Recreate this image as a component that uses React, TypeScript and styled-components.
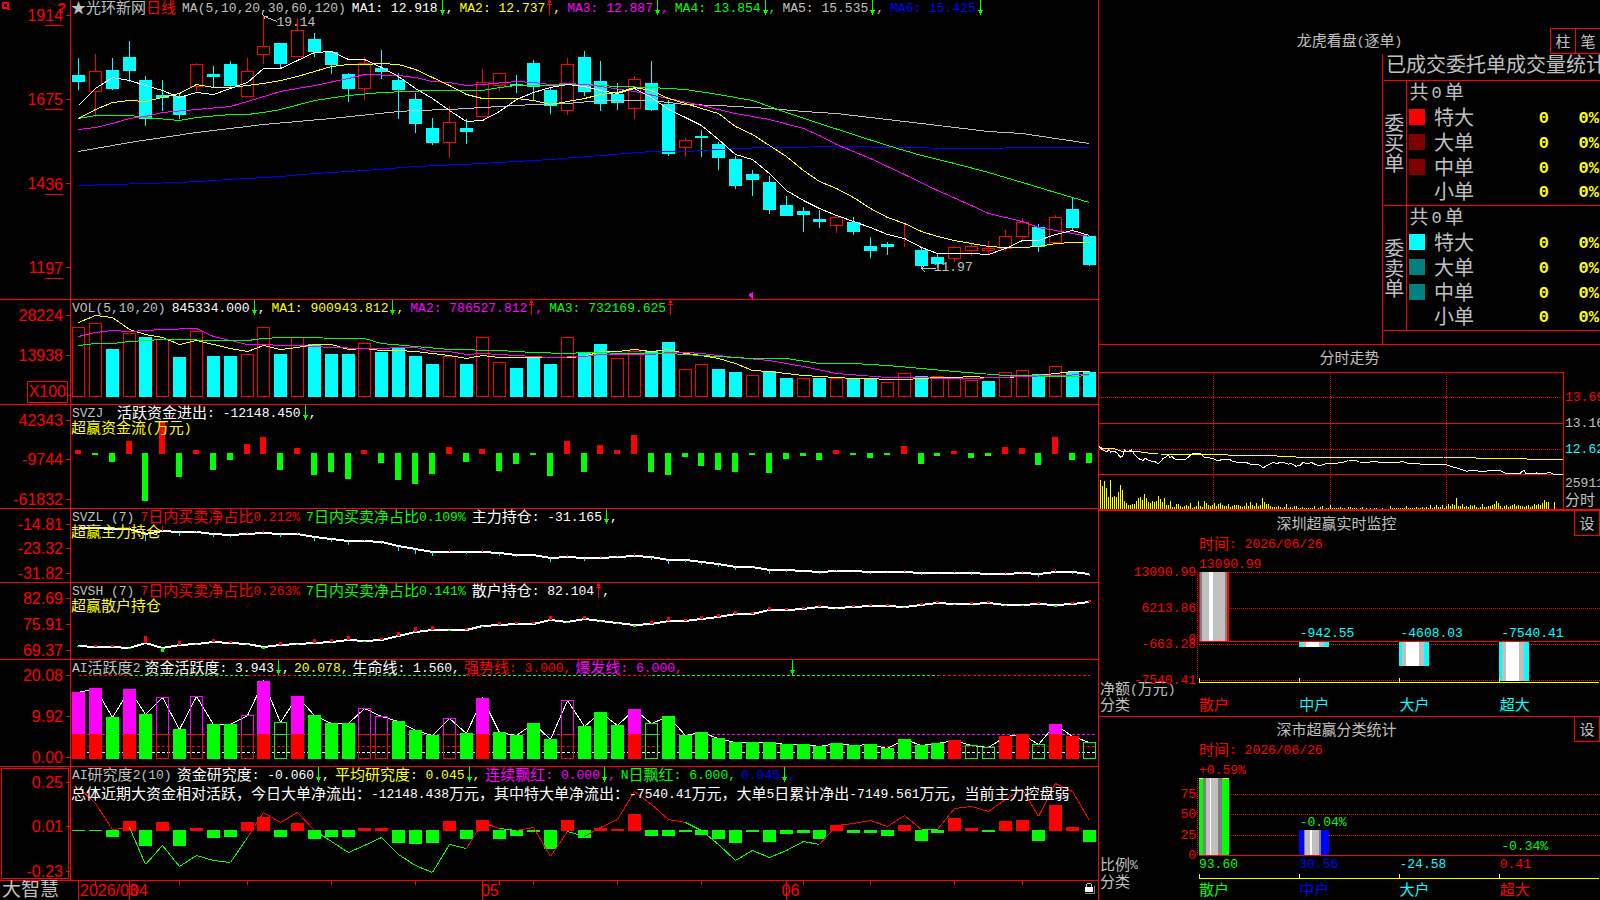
import React from 'react';
import styled, { createGlobalStyle } from 'styled-components';

const RED = '#ff0000';
const CYAN = '#00ffff';
const GREEN = '#00ff00';
const YELLOW = '#ffff00';
const MAGENTA = '#ff00ff';
const SILVER = '#c0c0c0';
const GRAY = '#808080';
const BLUE = '#0000ff';
const WHITE = '#ffffff';

const GlobalStyle = createGlobalStyle`
  * { box-sizing: border-box; }
  body {
    margin: 0;
    background: #000;
    color: ${SILVER};
    font-family: "Liberation Mono", "Noto Sans CJK SC", monospace;
    font-size: 13px;
    line-height: 16px;
    overflow: hidden;
  }
  h2 { margin: 0; font-weight: 400; font-size: 13px; }
`;

/* ---------- shared pieces ---------- */

const Cjk = styled.span<{ $size?: number }>`
  font-family: "Noto Sans CJK SC", sans-serif;
  font-size: ${p => p.$size ?? 15}px;
  font-weight: 400;
  line-height: 0;
  vertical-align: -1px;
`;

const Mixed = ({ text, size }: { text: string; size?: number }) => (
  <>
    {text.split(/([\u2605\u3000-\u9fff\uff00-\uffef]+)/).map((part, i) =>
      i % 2 ? <Cjk key={i} $size={size}>{part}</Cjk> : part
    )}
  </>
);

const ArrowSvg = styled.svg`
  flex: none;
  width: 8px;
  height: 15px;
`;

const Arrow = ({ dir }: { dir: 'up' | 'down' }) => (
  <ArrowSvg viewBox="0 0 8 15" shapeRendering="crispEdges">
    {dir === 'down' ? (
      <path d="M4.5 0V15M2 10.5H7M3 11.5H6M3 12.5H6" stroke={GREEN} fill="none" />
    ) : (
      <path d="M4.5 0V15M3 1.5H6M3 2.5H6M2 4.5H7" stroke={RED} fill="none" />
    )}
  </ArrowSvg>
);

/* ---------- page frame ---------- */

const Screen = styled.main`
  display: grid;
  grid-template-columns: minmax(0, 1099fr) minmax(0, 501fr);
  grid-template-rows: minmax(0, 1fr);
  height: 100vh;
  min-height: 720px;
  background: #000;
`;

const Charts = styled.section`
  display: grid;
  grid-template-rows:
    minmax(0, 300fr) minmax(0, 105fr) minmax(0, 104fr) minmax(0, 74fr)
    minmax(0, 77fr) minmax(0, 107fr) minmax(0, 114fr) minmax(0, 19fr);
  border-right: 1px solid ${RED};
  min-width: 0;
`;

const Side = styled.aside`
  display: grid;
  grid-template-rows: minmax(0, 345fr) minmax(0, 166fr) minmax(0, 206fr) minmax(0, 183fr);
  min-width: 0;
  overflow: hidden;
`;

/* ---------- indicator panels ---------- */

const Panel = styled.article`
  display: grid;
  grid-template-columns: 71px minmax(0, 1fr);
  grid-template-rows: minmax(0, 1fr);
  border-bottom: 1px solid ${RED};
  min-height: 0;
`;

const Axis = styled.div<{ $bottom?: number; $framed?: boolean }>`
  position: relative;
  display: flex;
  flex-direction: column;
  justify-content: space-between;
  padding: 6px 0 ${p => p.$bottom ?? 0}px;
  border-right: 1px solid ${RED};
  box-shadow: ${p => (p.$framed ? `inset 0 0 0 1px #000, inset 0 0 0 2px ${RED}` : 'none')};
`;

const AxisLabel = styled.div`
  display: flex;
  justify-content: flex-end;
  align-items: center;
  gap: 3px;
  height: 18px;
  color: ${RED};
  font: 16px/18px "Liberation Sans", sans-serif;
  &::after {
    content: "";
    width: 4px;
    height: 1px;
    background: ${RED};
  }
`;

const Digits = styled.span`
  padding-top: 1px;
`;

const Cents = styled.span`
  border-bottom: 1px solid ${RED};
  line-height: 19px;
  margin-top: 2px;
`;

const PriceLabel = styled(AxisLabel)`
  gap: 0;
  &::after { margin-left: 3px; }
`;

const UnitBox = styled.span`
  position: absolute;
  right: 2px;
  bottom: 1px;
  padding: 0 1px;
  border: 1px solid ${RED};
  background: #000;
  color: ${RED};
  font: 16px/20px "Liberation Sans", sans-serif;
`;

const CornerMark = styled.svg`
  position: absolute;
  left: 2px;
  top: 2px;
  width: 8px;
  height: 8px;
`;

const HelpMark = styled.span`
  position: absolute;
  right: 4px;
  top: 0;
  color: ${RED};
  font: bold 14px/16px "Liberation Sans", sans-serif;
`;

const Plot = styled.div`
  position: relative;
  display: grid;
  grid-template: minmax(0, 1fr) / minmax(0, 1fr);
  min-height: 0;
  & > * { grid-area: 1 / 1; }
`;

const Canvas = styled.svg`
  display: block;
  width: 100%;
  height: 100%;
  min-height: 0;
  & * { vector-effect: non-scaling-stroke; }
`;

const Overlay = styled.div`
  position: relative;
  align-self: start;
  display: grid;
  white-space: nowrap;
`;

const Legend = styled.header<{ $gap: number }>`
  display: flex;
  gap: ${p => p.$gap}px;
  height: 15px;
  padding-left: 1px;
  line-height: 18px;
`;

const LegendItem = styled.span<{ $color: string }>`
  display: flex;
  color: ${p => p.$color};
  & > span { white-space: pre; }
`;

const SubTitle = styled.div`
  color: ${YELLOW};
  line-height: 18px;
`;

const Message = styled.p`
  margin: 3px 0 0;
  color: ${WHITE};
  line-height: 20px;
`;

const PriceTag = styled.span<{ $x: number; $y: number }>`
  position: absolute;
  left: ${p => p.$x}%;
  top: ${p => p.$y}%;
  line-height: 16px;
`;

type Item = { text: string; color: string; arrow?: 'up' | 'down'; end?: string };

const LegendRow = ({ items, gap = 6 }: { items: Item[]; gap?: number }) => (
  <Legend $gap={gap}>
    {items.map((it, i) => (
      <LegendItem key={i} $color={it.color}>
        <span><Mixed text={it.text} /></span>
        {it.arrow && <Arrow dir={it.arrow} />}
        {it.end && <span>{it.end}</span>}
      </LegendItem>
    ))}
  </Legend>
);

const Labels = ({ values, framed }: { values: string[]; framed?: boolean }) => (
  <Axis $framed={framed}>
    {values.map((v, i) => <AxisLabel key={i}><Digits>{v}</Digits></AxisLabel>)}
  </Axis>
);

/* ---------- chart helpers ---------- */

const left = (i: number) => Math.round(72 + 16.85 * i);
const mid = (i: number) => left(i) + 6.5;

type Pair = [number, number];

const Line = ({ data, color, dy = 0 }: { data: Pair[]; color: string; dy?: number }) => (
  <polyline
    points={data.map(([i, y]) => `${mid(i)},${y + dy + 0.5}`).join(' ')}
    stroke={color} fill="none"
  />
);

/* two stacked strokes keep the line two pixels tall on every slope */
const ThickLine = ({ data }: { data: Pair[] }) => (
  <g>
    <Line data={data} color={WHITE} />
    <Line data={data} color={WHITE} dy={1} />
  </g>
);

const Hollow = ({ x, y, h, color }: { x: number; y: number; h: number; color: string }) => (
  <rect x={x + 0.5} y={y + 0.5} width={12} height={Math.max(h - 1, 0)} stroke={color} fill="none" />
);

const ChartSvg = ({ top, height, children }: { top: number; height: number; children: React.ReactNode }) => (
  <Canvas viewBox={`71 ${top} 1027 ${height}`} preserveAspectRatio="none" shapeRendering="crispEdges">
    {children}
  </Canvas>
);

const series = (values: number[]): Pair[] => values.map((v, i) => [i, v] as Pair);

/* ---------- data ---------- */

const candleKind = 'crcccccrccrrcrcccrccccrcrrcccrcccrccrcccccccc' + 'rcccrccrrrrrcrcc';
const candles: [number, number, number, number][] = [
  [58, 75, 82, 90], [54, 71, 92, 117], [58, 70, 89, 90], [41, 57, 71, 82], [76, 80, 119, 126],
  [80, 95, 98, 111], [94, 96, 115, 119], [63, 64, 87, 91], [66, 74, 77, 87], [61, 64, 86, 87],
  [58, 71, 97, 97], [16, 46, 55, 64], [43, 43, 64, 68], [18, 30, 57, 57], [33, 39, 52, 57],
  [51, 52, 65, 74], [73, 74, 89, 102], [57, 63, 89, 100], [50, 68, 72, 79], [73, 80, 90, 119],
  [93, 99, 124, 133], [118, 128, 143, 145], [106, 122, 143, 158], [119, 128, 132, 144], [69, 82, 117, 117],
  [73, 73, 86, 91], [75, 84, 86, 93], [60, 63, 87, 100], [87, 90, 106, 114], [58, 64, 111, 115],
  [51, 57, 92, 96], [61, 81, 104, 111], [83, 94, 103, 110], [76, 79, 109, 119], [61, 83, 110, 111],
  [100, 104, 154, 156], [138, 140, 148, 157], [130, 136, 138, 157], [142, 144, 158, 170], [156, 159, 186, 189],
  [170, 174, 180, 196], [176, 182, 210, 214], [196, 205, 216, 216], [207, 211, 215, 232], [210, 219, 222, 228],
  [217, 217, 226, 233], [217, 222, 232, 235], [237, 246, 251, 258], [242, 244, 247, 255], [224, 242, 243, 247],
  [247, 250, 266, 268], [254, 257, 264, 268], [247, 247, 259, 262], [244, 246, 251, 256], [241, 248, 251, 254],
  [230, 236, 249, 251], [218, 222, 237, 240], [224, 227, 247, 252], [215, 217, 243, 243], [197, 209, 228, 230],
  [236, 236, 265, 266],
];

const ma5 = series([
  105, 88, 77, 80, 85, 90, 97, 92, 94, 88, 82, 68, 68, 60, 52, 51, 59, 59, 67, 76, 88, 98, 110, 121, 120,
  111, 99, 92, 87, 84, 86, 90, 93, 88, 97, 109, 117, 125, 139, 154, 159, 173, 190, 200, 208, 215, 221, 227,
  234, 238, 247, 253, 253, 253, 254, 248, 240, 240, 234, 230, 235,
]);
const ma10 = series([
  118, 109, 102, 100, 101, 97, 93, 84, 87, 87, 85, 83, 80, 76, 71, 66, 64, 64, 63, 64, 69, 77, 85, 94, 98,
  98, 98, 100, 104, 101, 98, 94, 92, 87, 90, 98, 103, 108, 113, 126, 134, 145, 156, 170, 181, 188, 197, 208,
  217, 223, 231, 236, 240, 243, 246, 247, 247, 246, 243, 242, 242,
]);
const ma20: Pair[] = [
  [0, 129], [1, 127], [2, 123], [3, 118], [4, 116], [5, 112], [7, 109], [9, 106], [10, 101], [12, 91], [14, 85],
  [16, 78], [17, 74], [19, 75], [20, 77], [21, 81], [22, 82], [23, 85], [24, 84], [26, 81], [27, 82], [28, 84],
  [29, 83], [30, 84], [31, 86], [33, 91], [35, 98], [37, 105], [39, 113], [41, 119], [43, 128], [44, 135],
  [45, 144], [47, 158], [49, 174], [51, 190], [53, 205], [54, 213], [55, 217], [56, 221], [57, 227], [58, 230],
  [59, 233], [60, 236],
];
const ma30: Pair[] = [
  [0, 118], [1, 115], [3, 115], [4, 117], [6, 120], [7, 117], [9, 114], [10, 114], [11, 112], [12, 109],
  [14, 100], [16, 95], [18, 92], [21, 90], [24, 90], [25, 87], [26, 85], [28, 85], [29, 84], [30, 84], [32, 86],
  [34, 87], [36, 89], [38, 94], [40, 100], [42, 112], [44, 123], [46, 134], [48, 145], [50, 155], [52, 163],
  [54, 172], [56, 182], [58, 192], [59, 197], [60, 202],
];
const ma60: Pair[] = [
  [0, 151], [3, 142], [7, 132], [11, 124], [15, 118], [19, 111], [20, 110], [22, 109], [24, 107], [27, 104],
  [29, 103], [31, 100], [34, 100], [36, 104], [38, 105], [41, 108], [43, 111], [45, 113], [47, 117], [50, 123],
  [54, 131], [56, 133], [58, 138], [60, 143],
];
const ma120: Pair[] = [
  [0, 185], [6, 182], [12, 176], [14, 173], [17, 170], [20, 166], [24, 163], [28, 159], [31, 155], [34, 151],
  [36, 151], [38, 149], [39, 148], [41, 147], [46, 146], [48, 147], [53, 148], [57, 147], [60, 147],
];

const volumeKind = 'rrcrcrcrccrrcrcccrccccrcrrcccrccrrccrrccrccrcrccrrcrrrcrrcrcc';
const volumeTop = [
  327, 323, 349, 333, 337, 339, 357, 331, 356, 356, 354, 327, 354, 337, 344, 354, 354, 343, 352, 347, 356, 364,
  356, 364, 337, 362, 368, 357, 364, 337, 352, 344, 358, 351, 351, 342, 369, 364, 369, 372, 375, 371, 378, 378,
  378, 378, 379, 379, 382, 373, 376, 376, 378, 380, 381, 372, 370, 374, 366, 372, 372,
];
const volMa5 = series([
  322, 315, 317, 329, 334, 337, 344, 340, 344, 348, 351, 345, 349, 347, 344, 344, 349, 348, 350, 350, 351, 353,
  355, 358, 355, 357, 357, 357, 357, 357, 356, 351, 351, 349, 351, 349, 353, 355, 358, 363, 370, 371, 373, 375,
  376, 377, 378, 378, 379, 379, 378, 377, 377, 376, 377, 377, 376, 375, 373, 371, 371,
]);
const volMa10: Pair[] = [
  [0, 336], [1, 332], [2, 330], [3, 331], [5, 329], [7, 328], [8, 336], [10, 344], [13, 345], [15, 347], [17, 348],
  [20, 347], [21, 351], [22, 351], [23, 354], [24, 353], [26, 355], [28, 357], [30, 356], [31, 354], [34, 354],
  [35, 352], [36, 352], [37, 353], [39, 357], [41, 360], [43, 366], [45, 373], [48, 377], [53, 378], [56, 376],
  [58, 375], [60, 374],
];
const volMa20: Pair[] = [
  [0, 345], [1, 343], [2, 343], [3, 341], [5, 339], [9, 340], [10, 340], [11, 338], [12, 337], [17, 338], [18, 343],
  [20, 346], [22, 349], [25, 350], [27, 352], [29, 353], [30, 352], [33, 353], [35, 353], [37, 355], [40, 358],
  [42, 358], [44, 363], [46, 363], [48, 365], [50, 368], [52, 371], [55, 375], [59, 376], [60, 375],
];

const flow = [
  450, 455, 462, 441, 501, 421, 477, 450, 470, 460, 444, 437, 470, 448, 475, 472, 479, 450, 463, 480, 484, 474,
  447, 462, 449, 471, 464, 455, 476, 441, 472, 445, 450, 435, 472, 475, 457, 466, 470, 472, 455, 473, 459, 456,
  460, 450, 455, 458, 455, 446, 464, 456, 451, 458, 456, 447, 448, 465, 437, 460, 463,
];
const mainHold = [
  527, 527, 528, 528, 533, 530, 531, 531, 533, 534, 533, 532, 533, 533, 536, 538, 540, 540, 541, 545, 548, 551,
  551, 551, 551, 552, 554, 554, 557, 556, 557, 557, 556, 555, 556, 559, 559, 561, 563, 566, 566, 569, 569, 570,
  571, 570, 570, 571, 571, 571, 572, 572, 572, 572, 573, 573, 572, 573, 571, 571, 573,
];
const retailHold = [
  645, 646, 646, 647, 642, 647, 644, 643, 641, 642, 643, 646, 644, 643, 642, 641, 639, 640, 639, 635, 631, 629,
  629, 629, 625, 624, 623, 623, 619, 621, 618, 620, 622, 624, 623, 620, 620, 618, 616, 613, 613, 609, 609, 608,
  606, 607, 606, 605, 605, 606, 604, 602, 603, 603, 602, 604, 604, 603, 604, 603, 601,
];

const activeKind = 'MMGMGmGmGGmMgMGGGmmGGGmGMGGGGmGGGMgGGGGGGGGGGGGGGGGGRggRRgMRg';
const active = [
  692, 688, 717, 689, 714, 697, 729, 696, 724, 724, 715, 681, 722, 696, 715, 723, 723, 708, 716, 721, 730, 735,
  718, 733, 698, 732, 735, 723, 739, 700, 726, 712, 725, 709, 723, 716, 735, 732, 738, 742, 742, 742, 744, 744,
  746, 743, 745, 744, 748, 739, 745, 743, 740, 745, 747, 736, 734, 744, 724, 736, 742,
];
const capSegments: [number, number, string][] = [
  [0, 3, RED], [3, 10, GREEN], [10, 13, RED], [13, 23, GREEN], [23, 24, RED], [24, 32, GREEN], [32, 34, RED],
  [34, 51, GREEN], [51, 60, RED],
];

const study = [
  831, 831, 837, 821, 846, 822, 846, 828, 838, 837, 822, 817, 837, 823, 839, 837, 837, 828, 828, 843, 844, 843,
  821, 839, 820, 839, 836, 832, 849, 820, 838, 828, 829, 814, 836, 836, 832, 835, 839, 843, 832, 842, 834, 833,
  839, 825, 833, 833, 836, 825, 841, 833, 818, 828, 832, 821, 820, 841, 805, 827, 842,
];
const studyLine = [
  787, 803, 829, 827, 864, 845, 866, 855, 860, 862, 837, 812, 822, 812, 830, 841, 852, 845, 837, 854, 865, 872,
  844, 848, 822, 828, 830, 827, 856, 831, 836, 827, 819, 791, 804, 819, 822, 830, 844, 860, 850, 857, 850, 841,
  844, 825, 823, 820, 826, 815, 829, 829, 808, 806, 811, 799, 789, 816, 783, 791, 820,
];
const studyGreen = (i: number) =>
  (i >= 3 && i <= 9) || (i >= 14 && i <= 22) || i === 25 || i === 29 || (i >= 36 && i <= 43) || i === 50;

/* ---------- left side panels ---------- */

const PricePanel = () => (
  <Panel>
    <Axis $bottom={22}>
      <CornerMark viewBox="0 0 8 8" shapeRendering="crispEdges">
        <rect x="1" y="1" width="5" height="5" stroke={RED} strokeWidth="2" fill="none" />
        <path d="M5 7.5H8" stroke={RED} />
      </CornerMark>
      {['1914', '1675', '1436', '1197'].map(v => (
        <PriceLabel key={v}><Digits>{v.slice(0, 2)}</Digits><Cents>{v.slice(2)}</Cents></PriceLabel>
      ))}
      <HelpMark>?</HelpMark>
    </Axis>
    <Plot>
      <ChartSvg top={0} height={299}>
        {candles.map(([hi, top, bottom, lo], i) => {
          const up = candleKind[i] === 'r';
          const x = left(i);
          return up ? (
            <g key={i}>
              <path d={`M${x + 6.5} ${hi}V${top}M${x + 6.5} ${bottom}V${lo}`} stroke={RED} />
              <Hollow x={x} y={top} h={bottom - top} color={RED} />
            </g>
          ) : (
            <g key={i}>
              <path d={`M${x + 6.5} ${hi}V${lo}`} stroke={CYAN} />
              <rect x={x} y={top} width={13} height={bottom - top} fill={CYAN} />
            </g>
          );
        })}
        <Line data={ma120} color={BLUE} />
        <Line data={ma60} color={SILVER} />
        <Line data={ma30} color={GREEN} />
        <Line data={ma20} color={MAGENTA} />
        <Line data={ma10} color={YELLOW} />
        <Line data={ma5} color={WHITE} />
        <path d="M262 13.5L264.5 16.5L268 16.5M264.5 16.5V19M264.5 16.5L277 21.5" stroke={SILVER} fill="none" />
        <path d="M921 268.5H936M925 265L921.5 268.5L925 272" stroke={SILVER} fill="none" />
        <path d="M748 295L753 292V299Z" fill={MAGENTA} />
      </ChartSvg>
      <PriceTag $x={20} $y={5}>19.14</PriceTag>
      <PriceTag $x={84} $y={87}>11.97</PriceTag>
      <TopLegend>
        <LegendRow
          items={[
            { text: 'MA(5,10,20,30,60,120)', color: SILVER },
            { text: 'MA1: 12.918', color: WHITE, arrow: 'down', end: ',' },
            { text: 'MA2: 12.737', color: YELLOW, arrow: 'up', end: ',' },
            { text: 'MA3: 12.887', color: MAGENTA, arrow: 'down', end: ',' },
            { text: 'MA4: 13.854', color: GREEN, arrow: 'down', end: ',' },
            { text: 'MA5: 15.535', color: SILVER, arrow: 'down', end: ',' },
            { text: 'MA6: 15.425', color: BLUE, arrow: 'down' },
          ]}
        />
      </TopLegend>
    </Plot>
  </Panel>
);

const TopLegendBox = styled(Overlay)`
  grid-template-columns: auto auto 1fr;
  height: 15px;
  line-height: 18px;
`;

const Period = styled.span`
  color: ${RED};
  padding-right: 5px;
`;

const TopLegend = ({ children }: { children: React.ReactNode }) => (
  <TopLegendBox>
    <span><Mixed text="★光环新网" /></span>
    <Period><Mixed text="日线" /></Period>
    {children}
  </TopLegendBox>
);

const VolumePanel = () => (
  <Panel>
    <Axis>
      {['28224', '13938', ''].map((v, i) => <AxisLabel key={i}><Digits>{v}</Digits></AxisLabel>)}
      <UnitBox>X100</UnitBox>
    </Axis>
    <Plot>
      <ChartSvg top={300} height={104}>
        {volumeTop.map((y, i) =>
          volumeKind[i] === 'r'
            ? <Hollow key={i} x={left(i)} y={y} h={397 - y} color={RED} />
            : <rect key={i} x={left(i)} y={y} width={13} height={397 - y} fill={CYAN} />
        )}
        <Line data={volMa5} color={YELLOW} />
        <Line data={volMa10} color={MAGENTA} />
        <Line data={volMa20} color={GREEN} />
      </ChartSvg>
      <Overlay>
        <LegendRow
          items={[
            { text: 'VOL(5,10,20)', color: SILVER },
            { text: '845334.000', color: WHITE, arrow: 'down', end: ',' },
            { text: 'MA1: 900943.812', color: YELLOW, arrow: 'down', end: ',' },
            { text: 'MA2: 786527.812', color: MAGENTA, arrow: 'up', end: ',' },
            { text: 'MA3: 732169.625', color: GREEN, arrow: 'up' },
          ]}
        />
      </Overlay>
    </Plot>
  </Panel>
);

const FlowPanel = () => (
  <Panel>
    <Labels values={['42343', '-9744', '-61832']} />
    <Plot>
      <ChartSvg top={405} height={103}>
        {flow.map((y, i) =>
          y < 453
            ? <rect key={i} x={left(i) + 3} y={y} width={6} height={454 - y} fill={RED} />
            : <rect key={i} x={left(i) + 3} y={453} width={6} height={y - 453} fill={GREEN} />
        )}
      </ChartSvg>
      <Overlay>
        <LegendRow
          items={[
            { text: 'SVZJ ', color: SILVER },
            { text: '活跃资金进出: -12148.450', color: WHITE, arrow: 'down', end: ',' },
          ]}
        />
        <SubTitle><Mixed text="超赢资金流(万元)" /></SubTitle>
      </Overlay>
    </Plot>
  </Panel>
);

const MainHoldPanel = () => (
  <Panel>
    <Labels values={['-14.81', '-23.32', '-31.82']} />
    <Plot>
      <ChartSvg top={509} height={73}>
        <ThickLine data={series(mainHold)} />
        {flow.map((v, i) => {
          const len = Math.round(Math.abs(v - 453) * 0.13) + 1;
          return v < 453
            ? <rect key={i} x={left(i) + 6} y={mainHold[i] - len + 1} width={1} height={len} fill={RED} />
            : <rect key={i} x={left(i) + 6} y={mainHold[i] + 1} width={1} height={len} fill={CYAN} />;
        })}
      </ChartSvg>
      <Overlay>
        <LegendRow
          items={[
            { text: 'SVZL (7)', color: SILVER },
            { text: '7日内买卖净占比0.212%', color: RED },
            { text: '7日内买卖净占比0.109%', color: GREEN },
            { text: '主力持仓: -31.165', color: WHITE, arrow: 'down', end: ',' },
          ]}
        />
        <SubTitle><Mixed text="超赢主力持仓" /></SubTitle>
      </Overlay>
    </Plot>
  </Panel>
);

const RetailHoldPanel = () => (
  <Panel>
    <Labels values={['82.69', '75.91', '69.37']} />
    <Plot>
      <ChartSvg top={583} height={76}>
        <ThickLine data={series(retailHold)} />
        {flow.map((v, i) => {
          const len = Math.max(1, Math.round(Math.abs(v - 453) * 0.12));
          return v > 453
            ? <rect key={i} x={left(i) + 5} y={retailHold[i] - len} width={3} height={len + 1} fill={RED} />
            : <rect key={i} x={left(i) + 5} y={retailHold[i] + 1} width={3} height={len} fill={GREEN} />;
        })}
      </ChartSvg>
      <Overlay>
        <LegendRow
          items={[
            { text: 'SVSH (7)', color: SILVER },
            { text: '7日内买卖净占比0.263%', color: RED },
            { text: '7日内买卖净占比0.141%', color: GREEN },
            { text: '散户持仓: 82.104', color: WHITE, arrow: 'up', end: ',' },
          ]}
        />
        <SubTitle><Mixed text="超赢散户持仓" /></SubTitle>
      </Overlay>
    </Plot>
  </Panel>
);

const ActivePanel = () => (
  <Panel>
    <Labels values={['20.08', '9.92', '0.00']} />
    <Plot>
      <ChartSvg top={660} height={106}>
        {capSegments.map(([a, b, color]) => (
          <path key={a} d={`M${mid(a)} 675.5H${mid(b)}`} stroke={color} strokeDasharray="3 2" />
        ))}
        <path d="M72 734.5H1096" stroke={MAGENTA} strokeDasharray="3 2" />
        <path d="M72 746.5H1096" stroke={RED} strokeDasharray="3 2" />
        <path d="M72 752.5H1096" stroke={WHITE} strokeDasharray="3 2" />
        <Line data={series(active)} color={WHITE} />
        {active.map((y, i) => {
          const x = left(i);
          switch (activeKind[i]) {
            case 'M':
              return (
                <g key={i}>
                  <rect x={x} y={y} width={13} height={734 - y} fill={MAGENTA} />
                  <rect x={x} y={734} width={13} height={25} fill={RED} />
                </g>
              );
            case 'm':
              return (
                <g key={i}>
                  <Hollow x={x} y={y} h={735 - y} color={MAGENTA} />
                  <Hollow x={x} y={734} h={25} color={RED} />
                </g>
              );
            case 'g':
              return (
                <g key={i}>
                  <Hollow x={x} y={y} h={759 - y} color={GREEN} />
                  {y < 734 && <path d={`M${x} 734.5h13`} stroke={GREEN} />}
                </g>
              );
            default:
              return (
                <rect key={i} x={x} y={y} width={13} height={759 - y} fill={activeKind[i] === 'R' ? RED : GREEN} />
              );
          }
        })}
      </ChartSvg>
      <Overlay>
        <LegendRow
          gap={4}
          items={[
            { text: 'AI活跃度2', color: SILVER },
            { text: '资金活跃度: 3.943', color: WHITE, arrow: 'down', end: ',' },
            { text: '20.078,', color: YELLOW },
            { text: '生命线: 1.560,', color: WHITE },
            { text: '强势线: 3.000,', color: RED },
            { text: '爆发线: 6.000,', color: MAGENTA },
            { text: '             ', color: GREEN, arrow: 'down' },
          ]}
        />
      </Overlay>
    </Plot>
  </Panel>
);

const StudyPanel = () => (
  <Panel>
    <Labels framed values={['0.25', '0.01', '-0.23']} />
    <Plot>
      <ChartSvg top={767} height={113}>
        {study.map((y, i) =>
          y < 830
            ? <rect key={i} x={left(i)} y={y} width={13} height={831 - y} fill={RED} />
            : <rect key={i} x={left(i)} y={830} width={13} height={y - 830} fill={GREEN} />
        )}
        {studyLine.slice(1).map((y, i) => (
          <path
            key={i}
            d={`M${mid(i)} ${studyLine[i] + 0.5}L${mid(i + 1)} ${y + 0.5}`}
            stroke={studyGreen(i) ? GREEN : RED}
          />
        ))}
      </ChartSvg>
      <Overlay>
        <LegendRow
          gap={5}
          items={[
            { text: 'AI研究度2(10)', color: SILVER },
            { text: '资金研究度: -0.060', color: WHITE, arrow: 'down', end: ',' },
            { text: '平均研究度: 0.045', color: YELLOW, arrow: 'down', end: ',' },
            { text: '连续飘红: 0.000', color: MAGENTA, arrow: 'down', end: ',' },
            { text: 'N日飘红: 6.000,', color: GREEN },
            { text: '0.045', color: BLUE, arrow: 'down', end: ',' },
          ]}
        />
        <Message>
          <Mixed text="总体近期大资金相对活跃，今日大单净流出：-12148.438万元，其中特大单净流出：-7540.41万元，大单5日累计净出-7149.561万元，当前主力控盘弱" />
        </Message>
      </Overlay>
    </Plot>
  </Panel>
);

const Footer = styled.footer`
  display: grid;
  grid-template-columns: 71px minmax(0, 1fr);
  grid-template-rows: minmax(0, 1fr);
  min-height: 0;
`;

const Brand = styled.div`
  padding-left: 2px;
  font-size: 19px;
  line-height: 18px;
  white-space: nowrap;
`;

const Months = styled.div`
  display: grid;
  grid-template-columns: 3fr 21fr 18fr 19fr;
  padding-left: 8px;
  color: ${RED};
  font: 16px/19px "Liberation Sans", sans-serif;
  white-space: nowrap;
`;

const Month = styled.span`
  min-width: 0;
  padding-left: 1px;
`;

const LockIcon = styled.svg`
  justify-self: end;
  width: 12px;
  height: 13px;
  margin: 0 3px;
`;

const DateAxis = () => (
  <Footer>
    <Brand><Mixed text="大智慧" size={19} /></Brand>
    <Plot>
      <ChartSvg top={881} height={19}>
        {[1, 6, 10, 15, 20, 25, 27, 32, 37, 43, 47, 52, 56].map(i => (
          <path key={i} d={`M${mid(i)} 881v4`} stroke={RED} />
        ))}
        {[0, 3, 24, 42].map(i => <path key={i} d={`M${mid(i)} 881v19`} stroke={RED} />)}
      </ChartSvg>
      <Months>
        {['2026/03', '04', '05', '06'].map(m => <Month key={m}>{m}</Month>)}
      </Months>
      <LockIcon viewBox="0 0 12 13" shapeRendering="crispEdges">
        <path d="M3.5 6V3.5L4.5 2.5H7.5L8.5 3.5V6" stroke={SILVER} fill="none" />
        <rect x="2" y="6" width="8" height="5" fill={WHITE} />
        <path d="M11.5 5V12.5H2" stroke={GRAY} fill="none" />
      </LockIcon>
    </Plot>
  </Footer>
);

/* ---------- order statistics ---------- */

const SidePanel = styled.section`
  display: flex;
  flex-direction: column;
  min-width: 0;
  min-height: 0;
  border-bottom: 1px solid ${RED};
  &:last-child { border-bottom: 0; }
`;

const TitleBar = styled.div<{ $tall?: boolean }>`
  display: grid;
  grid-template-columns: minmax(0, 1fr) auto;
  flex: none;
  height: 25px;
  margin-top: ${p => (p.$tall ? 28 : 0)}px;
  text-align: center;
  h2 { line-height: 27px; }
`;

const Tools = styled.div`
  display: flex;
  height: 26px;
`;

const ToolButton = styled.button<{ $flushTop?: boolean }>`
  width: ${p => (p.$flushTop ? 26 : 25)}px;
  height: ${p => (p.$flushTop ? 25 : 26)}px;
  padding: 0;
  border: 1px solid ${RED};
  border-width: ${p => (p.$flushTop ? '0 1px 1px 1px' : '1px 0 1px 1px')};
  background: #000;
  color: ${SILVER};
  font: 15px/22px "Noto Sans CJK SC", sans-serif;
`;

const OrderTools = styled(Tools)`
  margin-left: -50px;
`;

const OrderBody = styled.div`
  display: grid;
  grid-template-columns: minmax(0, 1fr) 218px;
  flex: 1;
  min-height: 0;
  margin-top: 1px;
`;

const OrderStats = styled.div`
  grid-column: 2;
  border-left: 1px solid ${RED};
  padding-left: 1px;
`;

const OrderTable = styled.table`
  width: 100%;
  table-layout: fixed;
  border-collapse: collapse;
  color: ${SILVER};
  tr { height: 25px; }
  tbody { border-top: 1px solid ${RED}; border-bottom: 1px solid ${RED}; }
`;

const Caption = styled.caption`
  height: 26px;
  text-align: left;
`;

const CaptionText = styled.span`
  display: block;
  contain: inline-size;
  padding-left: 2px;
  font-size: 20px;
  line-height: 23px;
  white-space: nowrap;
`;

const SideHead = styled.th`
  padding: 0;
  border-right: 1px solid ${RED};
  writing-mode: vertical-rl;
  font-weight: 400;
  line-height: 20px;
  text-align: center;
`;

const NameHead = styled.th`
  padding: 0;
  font-size: 20px;
  font-weight: 400;
  line-height: 23px;
  text-align: left;
  white-space: nowrap;
`;

const SwatchCell = styled.td`
  padding: 0;
`;

const TotalCell = styled.td`
  padding: 0 0 0 3px;
`;

const Total = styled.span`
  display: flex;
  gap: 3px;
  font-size: 17px;
  line-height: 23px;
`;

const Swatch = styled.span<{ $color: string }>`
  display: block;
  width: 16px;
  height: 16px;
  margin: 0 0 2px 2px;
  background: ${p => p.$color};
`;

const Figure = styled.td`
  padding: 0 1px 0 0;
  color: ${YELLOW};
  text-align: right;
  font-size: 17px;
  font-weight: 700;
  line-height: 23px;
`;

const orderGroups = [
  { side: '委买单', colors: [RED, '#800000', '#800000', 'transparent'] },
  { side: '委卖单', colors: [CYAN, '#008080', '#008080', 'transparent'] },
];
const orderSizes = ['特大', '大单', '中单', '小单'];

const OrdersPanel = () => (
  <SidePanel>
    <TitleBar $tall>
      <h2><Mixed text="龙虎看盘(逐单)" /></h2>
      <OrderTools>
        <ToolButton type="button">柱</ToolButton>
        <ToolButton type="button">笔</ToolButton>
      </OrderTools>
    </TitleBar>
    <OrderBody>
      <OrderStats>
        <OrderTable>
          <Caption><CaptionText><Mixed text="已成交委托单成交量统计" size={20} /></CaptionText></Caption>
          <colgroup>
            <col style={{ width: 22 }} />
            <col style={{ width: 28 }} />
            <col style={{ width: 56 }} />
            <col />
            <col style={{ width: 50 }} />
          </colgroup>
          {orderGroups.map(g => (
            <tbody key={g.side}>
              <tr>
                <SideHead rowSpan={5} scope="rowgroup"><Mixed text={g.side} size={20} /></SideHead>
                <TotalCell colSpan={4}>
                  <Total>
                    <span><Mixed text="共" size={19} /></span>
                    <span>0</span>
                    <span><Mixed text="单" size={19} /></span>
                  </Total>
                </TotalCell>
              </tr>
              {orderSizes.map((name, i) => (
                <tr key={name}>
                  <SwatchCell><Swatch $color={g.colors[i]} /></SwatchCell>
                  <NameHead scope="row"><Mixed text={name} size={20} /></NameHead>
                  <Figure>0</Figure>
                  <Figure>0%</Figure>
                </tr>
              ))}
            </tbody>
          ))}
        </OrderTable>
      </OrderStats>
    </OrderBody>
  </SidePanel>
);

/* ---------- intraday chart ---------- */

const IntradayPanelBox = styled(SidePanel)`
  border-bottom-width: 2px;
`;

const IntradayBody = styled.div`
  display: grid;
  grid-template-columns: minmax(0, 1fr) 37px;
  grid-template-rows: minmax(0, 1fr);
  flex: 1;
  min-height: 0;
  margin-top: 2px;
`;

const IntradayScale = styled.div`
  display: grid;
  grid-template-rows: 34fr 26fr 26fr 34fr 17fr;
  align-items: end;
  padding-left: 1px;
  border-left: 1px solid ${RED};
  white-space: nowrap;
`;

const ScaleLabel = styled.span<{ $color: string }>`
  color: ${p => p.$color};
`;

const priceTrack =
  '27,320 36,330 50,337 56,330 62,337 75,336 82,341 92,353 98,350 104,331 112,336 124,330 134,345 148,358 160,363 165,355 178,363 195,366 204,373 212,366 218,358 228,352 236,346 240,354 246,350 254,358 285,361 300,348 312,340 330,340 342,352 370,357 385,364 398,358 418,358 425,364 450,370 470,369 480,373 508,376 520,384 530,378 550,368 562,373 570,367 590,371 595,374 601,370 618,380 632,376 640,368 650,373 665,369 680,376 695,376 705,373 745,370 755,368 768,366 775,361 795,362 808,367 830,368 850,366 875,368 900,370 940,366 950,370 975,370 990,373 1045,373 1070,376 1090,382 1120,391 1130,395 1145,391 1165,394 1190,394 1200,391 1228,391 1240,397 1252,403 1290,401 1302,391 1308,403 1340,400 1360,402 1380,398 1390,403 1419,403';
const averageTrack =
  '27,320 36,326 75,328 92,334 145,336 175,340 205,343 365,344 440,347 500,348 560,349 618,352 1060,352 1190,356 1310,358 1419,361';

/* one base-36 digit for each minute bar */
const minuteVolume =
  'tnslctcdchoj8644558bc9fb76878da7b448225532343612383286434635643352344432363743634b755322232125121331' +
  '12111113012301141111211022111012010101100100031111111311112112121412422413535' +
  '4b3352324342125223345863134234534332342354546977007';

const IntradayPanel = () => (
  <IntradayPanelBox>
    <TitleBar><h2><Mixed text="分时走势" /></h2></TitleBar>
    <IntradayBody>
      <Canvas viewBox="27 97 1392 411" preserveAspectRatio="none" shapeRendering="crispEdges">
        <path d="M27 98.5H1419M27 251.5H1419M27 404.5H1419" stroke={RED} fill="none" />
        <path
          d="M27 173.5H1419M27 329.5H1419M371.5 97V508M722.5 97V508M1070.5 97V508"
          stroke={RED} strokeDasharray="1 1" fill="none"
        />
        {[...minuteVolume].map((c, i) => {
          const h = parseInt(c, 36) * 3;
          return <rect key={i} x={30 + i * 6} y={508 - h} width={3} height={h} fill={YELLOW} />;
        })}
        <polyline points={averageTrack} stroke={YELLOW} fill="none" />
        <polyline points={priceTrack} stroke={WHITE} fill="none" />
      </Canvas>
      <IntradayScale>
        <ScaleLabel $color={RED}>13.69</ScaleLabel>
        <ScaleLabel $color={SILVER}>13.16</ScaleLabel>
        <ScaleLabel $color={CYAN}>12.62</ScaleLabel>
        <ScaleLabel $color={SILVER}>25911</ScaleLabel>
        <ScaleLabel $color={SILVER}><Mixed text="分时" /></ScaleLabel>
      </IntradayScale>
    </IntradayBody>
  </IntradayPanelBox>
);

/* ---------- classified bar charts ---------- */

const DateLine = styled.div`
  flex: none;
  height: 16px;
  padding-left: 100px;
  color: ${RED};
  line-height: 18px;
`;

const BarArea = styled.div`
  display: grid;
  grid-template-columns: 98px minmax(0, 1fr);
  grid-template-rows: minmax(0, 1fr);
  flex: 1;
  min-height: 0;
  margin-top: 20px;
`;

const BarScale = styled.div<{ $top: number; $bottom: number }>`
  position: relative;
  display: flex;
  flex-direction: column;
  justify-content: space-between;
  margin: ${p => p.$top}px 1px ${p => p.$bottom}px 0;
  color: ${RED};
  text-align: right;
`;

const ZeroLabel = styled.span`
  position: absolute;
  right: 0;
  top: 54%;
`;

const BarPlot = styled.div`
  position: relative;
  min-width: 0;
`;

const BarValue = styled.span<{ $col: number; $y: number; $color: string }>`
  position: absolute;
  left: calc(2px + ${p => p.$col * 25}%);
  bottom: ${p => p.$y}%;
  color: ${p => p.$color};
`;

const BarFoot = styled.div`
  display: grid;
  grid-template-columns: 98px minmax(0, 1fr);
  flex: none;
`;

const FootLabels = styled.div<{ $gap: number; $top: number }>`
  display: flex;
  flex-direction: column;
  gap: ${p => p.$gap}px;
  margin-top: ${p => p.$top}px;
  padding-left: 1px;
  white-space: nowrap;
`;

const Columns = styled.div`
  display: grid;
  grid-template-columns: repeat(4, 1fr);
  padding-left: 2px;
`;

const Cell = styled.span<{ $color: string }>`
  color: ${p => p.$color};
`;

const FootColumn = styled.div<{ $top: number; $bottom: number }>`
  padding: ${p => p.$top}px 0 ${p => p.$bottom}px;
`;

const AxisSvg = styled(Canvas)`
  height: 6px;
  margin-bottom: 4px;
`;

type Stripe = [number, string];

const StripedBar = ({ x, y, h, stripes }: { x: number; y: number; h: number; stripes: Stripe[] }) => {
  let at = x;
  return (
    <g>
      {stripes.map(([w, color], i) => {
        const start = at;
        at += w;
        return <rect key={i} x={start} y={y} width={w} height={h} fill={color} />;
      })}
    </g>
  );
};

const silverRed: Stripe[] = [[1, RED], [2, GRAY], [7, SILVER], [4, WHITE], [12, SILVER], [2, GRAY], [2, RED]];
const silverCyan: Stripe[] = [[3, CYAN], [4, SILVER], [13, WHITE], [5, SILVER], [5, CYAN]];
const silverGreen: Stripe[] = [[4, GREEN], [3, GRAY], [4, SILVER], [1, WHITE], [7, SILVER], [4, GRAY], [7, GREEN]];
const silverBlue: Stripe[] = [[5, BLUE], [1, GRAY], [5, SILVER], [2, WHITE], [7, SILVER], [2, GRAY], [8, BLUE]];

const BarHead = ({ title }: { title: string }) => (
  <>
    <TitleBar>
      <h2><Mixed text={title} /></h2>
      <Tools><ToolButton type="button" $flushTop>设</ToolButton></Tools>
    </TitleBar>
    <DateLine><Mixed text="时间: 2026/06/26" /></DateLine>
  </>
);

const CategoryRow = ({ colors }: { colors: string[] }) => (
  <Columns>
    {['散户', '中户', '大户', '超大'].map((n, i) => (
      <Cell key={n} $color={colors[i]}><Mixed text={n} /></Cell>
    ))}
  </Columns>
);

const RealtimePanel = () => (
  <SidePanel>
    <BarHead title="深圳超赢实时监控" />
    <BarArea>
      <BarScale $top={-7} $bottom={-6}>
        {['13090.99', '6213.86', '-663.28', '-7540.41'].map(v => <span key={v}>{v}</span>)}
        <ZeroLabel>0</ZeroLabel>
      </BarScale>
      <BarPlot>
        <Canvas viewBox="1197 572 403 111" preserveAspectRatio="none" shapeRendering="crispEdges">
          <path
            d="M1229 572.5H1600M1229 608.5H1600M1199 644.5H1600M1199 680.5H1600M1197.5 572V680"
            stroke={RED} strokeDasharray="1 1" fill="none"
          />
          <StripedBar x={1199} y={572} h={69} stripes={silverRed} />
          <path d="M1199 641.5H1600" stroke={RED} />
          <StripedBar x={1299} y={642} h={5} stripes={silverCyan} />
          <StripedBar x={1399} y={642} h={24} stripes={silverCyan} />
          <StripedBar x={1499} y={642} h={39} stripes={silverCyan} />
          <path d="M1199 682.5H1599M1199.5 678V683M1299.5 678V683M1399.5 678V683M1499.5 678V683" stroke={YELLOW} fill="none" />
        </Canvas>
        <BarValue $col={0} $y={99} $color={RED}>13090.99</BarValue>
        <BarValue $col={1} $y={37} $color={CYAN}>-942.55</BarValue>
        <BarValue $col={2} $y={37} $color={CYAN}>-4608.03</BarValue>
        <BarValue $col={3} $y={37} $color={CYAN}>-7540.41</BarValue>
      </BarPlot>
    </BarArea>
    <BarFoot>
      <FootLabels $gap={0} $top={-1}>
        <span><Mixed text="净额(万元)" /></span>
        <span><Mixed text="分类" /></span>
      </FootLabels>
      <FootColumn $top={15} $bottom={2}>
        <CategoryRow colors={[RED, CYAN, CYAN, CYAN]} />
      </FootColumn>
    </BarFoot>
  </SidePanel>
);

const RatioPanel = () => (
  <SidePanel>
    <BarHead title="深市超赢分类统计" />
    <BarArea>
      <BarScale $top={9} $bottom={-7}>
        {['75', '50', '25', '0'].map(v => <span key={v}>{v}</span>)}
      </BarScale>
      <BarPlot>
        <Canvas viewBox="1197 778 403 79" preserveAspectRatio="none" shapeRendering="crispEdges">
          <path
            d="M1229 794.5H1600M1229 814.5H1600M1229 835.5H1600M1197.5 778V855"
            stroke={RED} strokeDasharray="1 1" fill="none"
          />
          <StripedBar x={1199} y={778} h={77} stripes={silverGreen} />
          <path d="M1199 778.5H1203M1223 778.5H1229" stroke={YELLOW} />
          <StripedBar x={1299} y={830} h={25} stripes={silverBlue} />
          <path d="M1199 855.5H1600" stroke={RED} />
        </Canvas>
        <BarValue $col={0} $y={99} $color={RED}>+0.59%</BarValue>
        <BarValue $col={1} $y={33} $color={GREEN}>-0.04%</BarValue>
        <BarValue $col={3} $y={2} $color={GREEN}>-0.34%</BarValue>
      </BarPlot>
    </BarArea>
    <BarFoot>
      <FootLabels $gap={1} $top={1}>
        <span><Mixed text="比例%" /></span>
        <span><Mixed text="分类" /></span>
      </FootLabels>
      <FootColumn $top={0} $bottom={1}>
        <Columns>
          <Cell $color={GREEN}>93.60</Cell>
          <Cell $color={BLUE}>30.56</Cell>
          <Cell $color={CYAN}>-24.58</Cell>
          <Cell $color={RED}>0.41</Cell>
        </Columns>
        <AxisSvg viewBox="1197 873 403 6" preserveAspectRatio="none" shapeRendering="crispEdges">
          <path d="M1199 878.5H1599M1199.5 874V879M1299.5 874V879M1399.5 874V879M1499.5 874V879" stroke={YELLOW} fill="none" />
        </AxisSvg>
        <CategoryRow colors={[GREEN, BLUE, CYAN, RED]} />
      </FootColumn>
    </BarFoot>
  </SidePanel>
);

export default function App() {
  return (
    <>
      <GlobalStyle />
      <Screen>
        <Charts>
          <PricePanel />
          <VolumePanel />
          <FlowPanel />
          <MainHoldPanel />
          <RetailHoldPanel />
          <ActivePanel />
          <StudyPanel />
          <DateAxis />
        </Charts>
        <Side>
          <OrdersPanel />
          <IntradayPanel />
          <RealtimePanel />
          <RatioPanel />
        </Side>
      </Screen>
    </>
  );
}
